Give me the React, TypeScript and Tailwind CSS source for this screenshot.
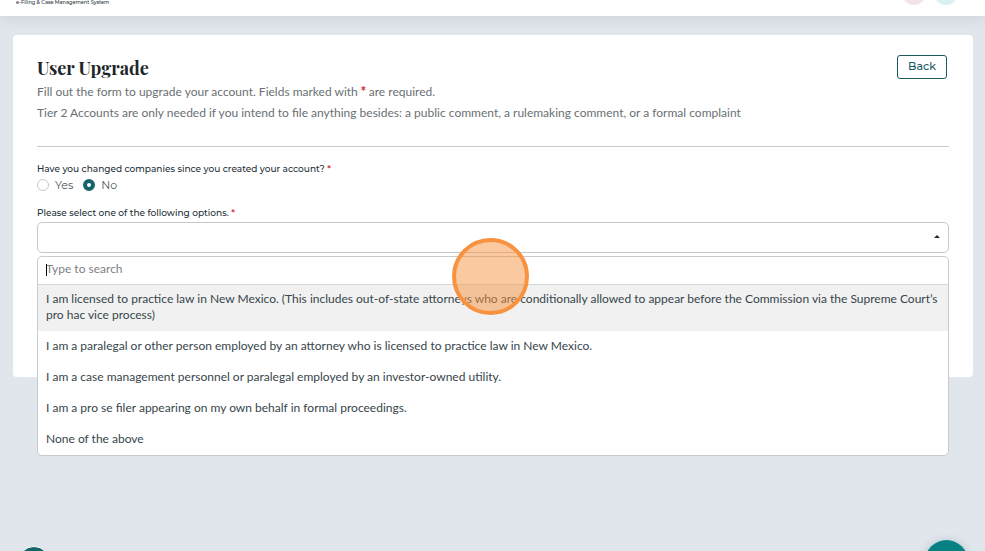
import { useState } from "react";

const options = [
  "I am licensed to practice law in New Mexico. (This includes out-of-state attorneys who are conditionally allowed to appear before the Commission via the Supreme Court’s pro hac vice process)",
  "I am a paralegal or other person employed by an attorney who is licensed to practice law in New Mexico.",
  "I am a case management personnel or paralegal employed by an investor-owned utility.",
  "I am a pro se filer appearing on my own behalf in formal proceedings.",
  "None of the above",
];

function Required() {
  return <span className="font-['Montserrat','Inter',sans-serif] font-medium text-[#d3212d]">*</span>;
}

function Header() {
  return (
    <header className="relative flex h-4 items-start justify-between bg-white pl-4 pr-[27px] shadow-[0_2px_14px_rgba(60,75,90,0.12)]">
      <span className="text-[5px] font-medium leading-[5px] text-[#1d3038]">e-Filing &amp; Case Management System</span>
      <div className="flex h-[5px] items-end gap-2">
        <span className="size-6 rounded-full bg-[#f2e3eb]"></span>
        <span className="size-6 rounded-full bg-[#d9f1f1]"></span>
      </div>
    </header>
  );
}

function OptionSelect() {
  const [open, setOpen] = useState(true);
  const [query, setQuery] = useState("");
  const [active, setActive] = useState(0);

  return (
    <div className="relative mt-[3px]">
      <button
        id="filer-type"
        type="button"
        aria-haspopup="listbox"
        aria-expanded={open}
        onClick={() => setOpen(!open)}
        className="flex h-[31px] w-full items-center justify-end rounded-[5px] border border-[#c5c9cd] bg-white pr-2"
      >
        <svg viewBox="0 0 6 3" className="mb-0.5 h-[3px] w-1.5" fill="#222b30">
          <path d="M0 3L3 0L6 3Z" />
        </svg>
      </button>

      {open && (
        <div className="absolute inset-x-0 top-[34px] overflow-hidden rounded-[5px] border border-[#c5cbcf] bg-white">
          <div className="relative border-b border-[#d4d7d9]">
            <input
              type="text"
              aria-label="Type to search"
              placeholder="Type to search"
              value={query}
              onChange={(e) => setQuery(e.target.value)}
              className="block h-[27px] w-full px-2 pb-1 font-['Lato',sans-serif] text-xs outline-none placeholder:text-[#7c8184]"
            />
            {query === "" && <span className="absolute left-2 top-[7px] h-3 w-px bg-black"></span>}
          </div>
          <ul role="listbox" aria-labelledby="filer-type-label" className="flex flex-col gap-px">
            {options.map((option, idx) => (
              <li
                key={option}
                role="option"
                aria-selected={active === idx}
                onMouseEnter={() => setActive(idx)}
                className={`px-2 pb-2 pt-1.5 font-['Lato',sans-serif] text-xs leading-4 text-[#37454b] ${active === idx ? "bg-[#f1f1f1]" : ""}`}
              >
                {option}
              </li>
            ))}
          </ul>
        </div>
      )}

      {/* Click marker */}
      <span className="pointer-events-none absolute left-1/2 top-4 -ml-[41px] size-[77px] rounded-full border-4 border-[#f79340] bg-[#f79340]/50"></span>
    </div>
  );
}

export default function App() {
  const [changed, setChanged] = useState("No");

  return (
    <div className="min-h-screen bg-[#e1e5ec] font-['Montserrat','Inter',sans-serif]">
      <Header />

      <main className="ml-[13px] mr-3 mt-[19px] min-h-[342px] rounded-[4px] bg-white px-6 pt-5">
        <div className="flex items-start justify-between">
          <h1 className="font-['Playfair_Display','Liberation_Serif',serif] text-lg font-bold leading-[26px] text-[#212529]">
            User Upgrade
          </h1>
          <button type="button" className="mr-0.5 h-6 rounded-[3px] border border-[#1b5a5f] px-2.5 pb-0.5 text-[11px] font-medium leading-5 text-[#1b5a5f]">
            Back
          </button>
        </div>
        <p className="font-['Lato',sans-serif] text-xs leading-[21px] text-[#6a7073]">
          Fill out the form to upgrade your account. Fields marked with <Required /> are required.
        </p>
        <p className="font-['Lato',sans-serif] text-xs leading-[21px] text-[#6a7073]">
          Tier 2 Accounts are only needed if you intend to file anything besides: a public comment, a rulemaking comment, or a formal complaint
        </p>

        <hr className="mt-[23px] border-[#c5cacd]" />

        <form className="mt-4">
          <fieldset>
            <legend className="text-[9px] font-medium leading-3 text-[#1d3038]">
              Have you changed companies since you created your account? <Required />
            </legend>
            <div className="flex gap-2.5">
              {["Yes", "No"].map((value) => (
                <label key={value} className="flex items-center gap-1.5 text-[11px] leading-5 text-[#4b5659]">
                  <input
                    type="radio"
                    name="changed"
                    value={value}
                    checked={changed === value}
                    onChange={() => setChanged(value)}
                    className="size-3 appearance-none rounded-full border border-[#c5c9cd] bg-white checked:border-4 checked:border-[#146469]"
                  />
                  {value}
                </label>
              ))}
            </div>
          </fieldset>

          <label id="filer-type-label" htmlFor="filer-type" className="mt-3 block text-[9px] font-medium leading-3 text-[#1d3038]">
            Please select one of the following options. <Required />
          </label>
          <OptionSelect />
        </form>
      </main>

      {/* Floating buttons */}
      <button type="button" aria-label="Accessibility" className="fixed -bottom-[27px] left-[18px] flex size-8 justify-center rounded-full border border-white bg-[#146469] pt-[3px]">
        <svg viewBox="0 0 24 24" className="size-6" fill="none" stroke="white" strokeWidth="2" strokeLinecap="round">
          <circle cx="12" cy="3" r="1" />
          <path d="M4 8l8 1l8-1M12 9v6M12 15l-4 7M12 15l4 7" />
        </svg>
      </button>
      <button type="button" aria-label="Chat" className="fixed -bottom-8 right-[17px] size-[43px] rounded-full bg-[#078183] shadow-[0_1px_8px_rgba(0,80,90,0.25)]"></button>
    </div>
  );
}
